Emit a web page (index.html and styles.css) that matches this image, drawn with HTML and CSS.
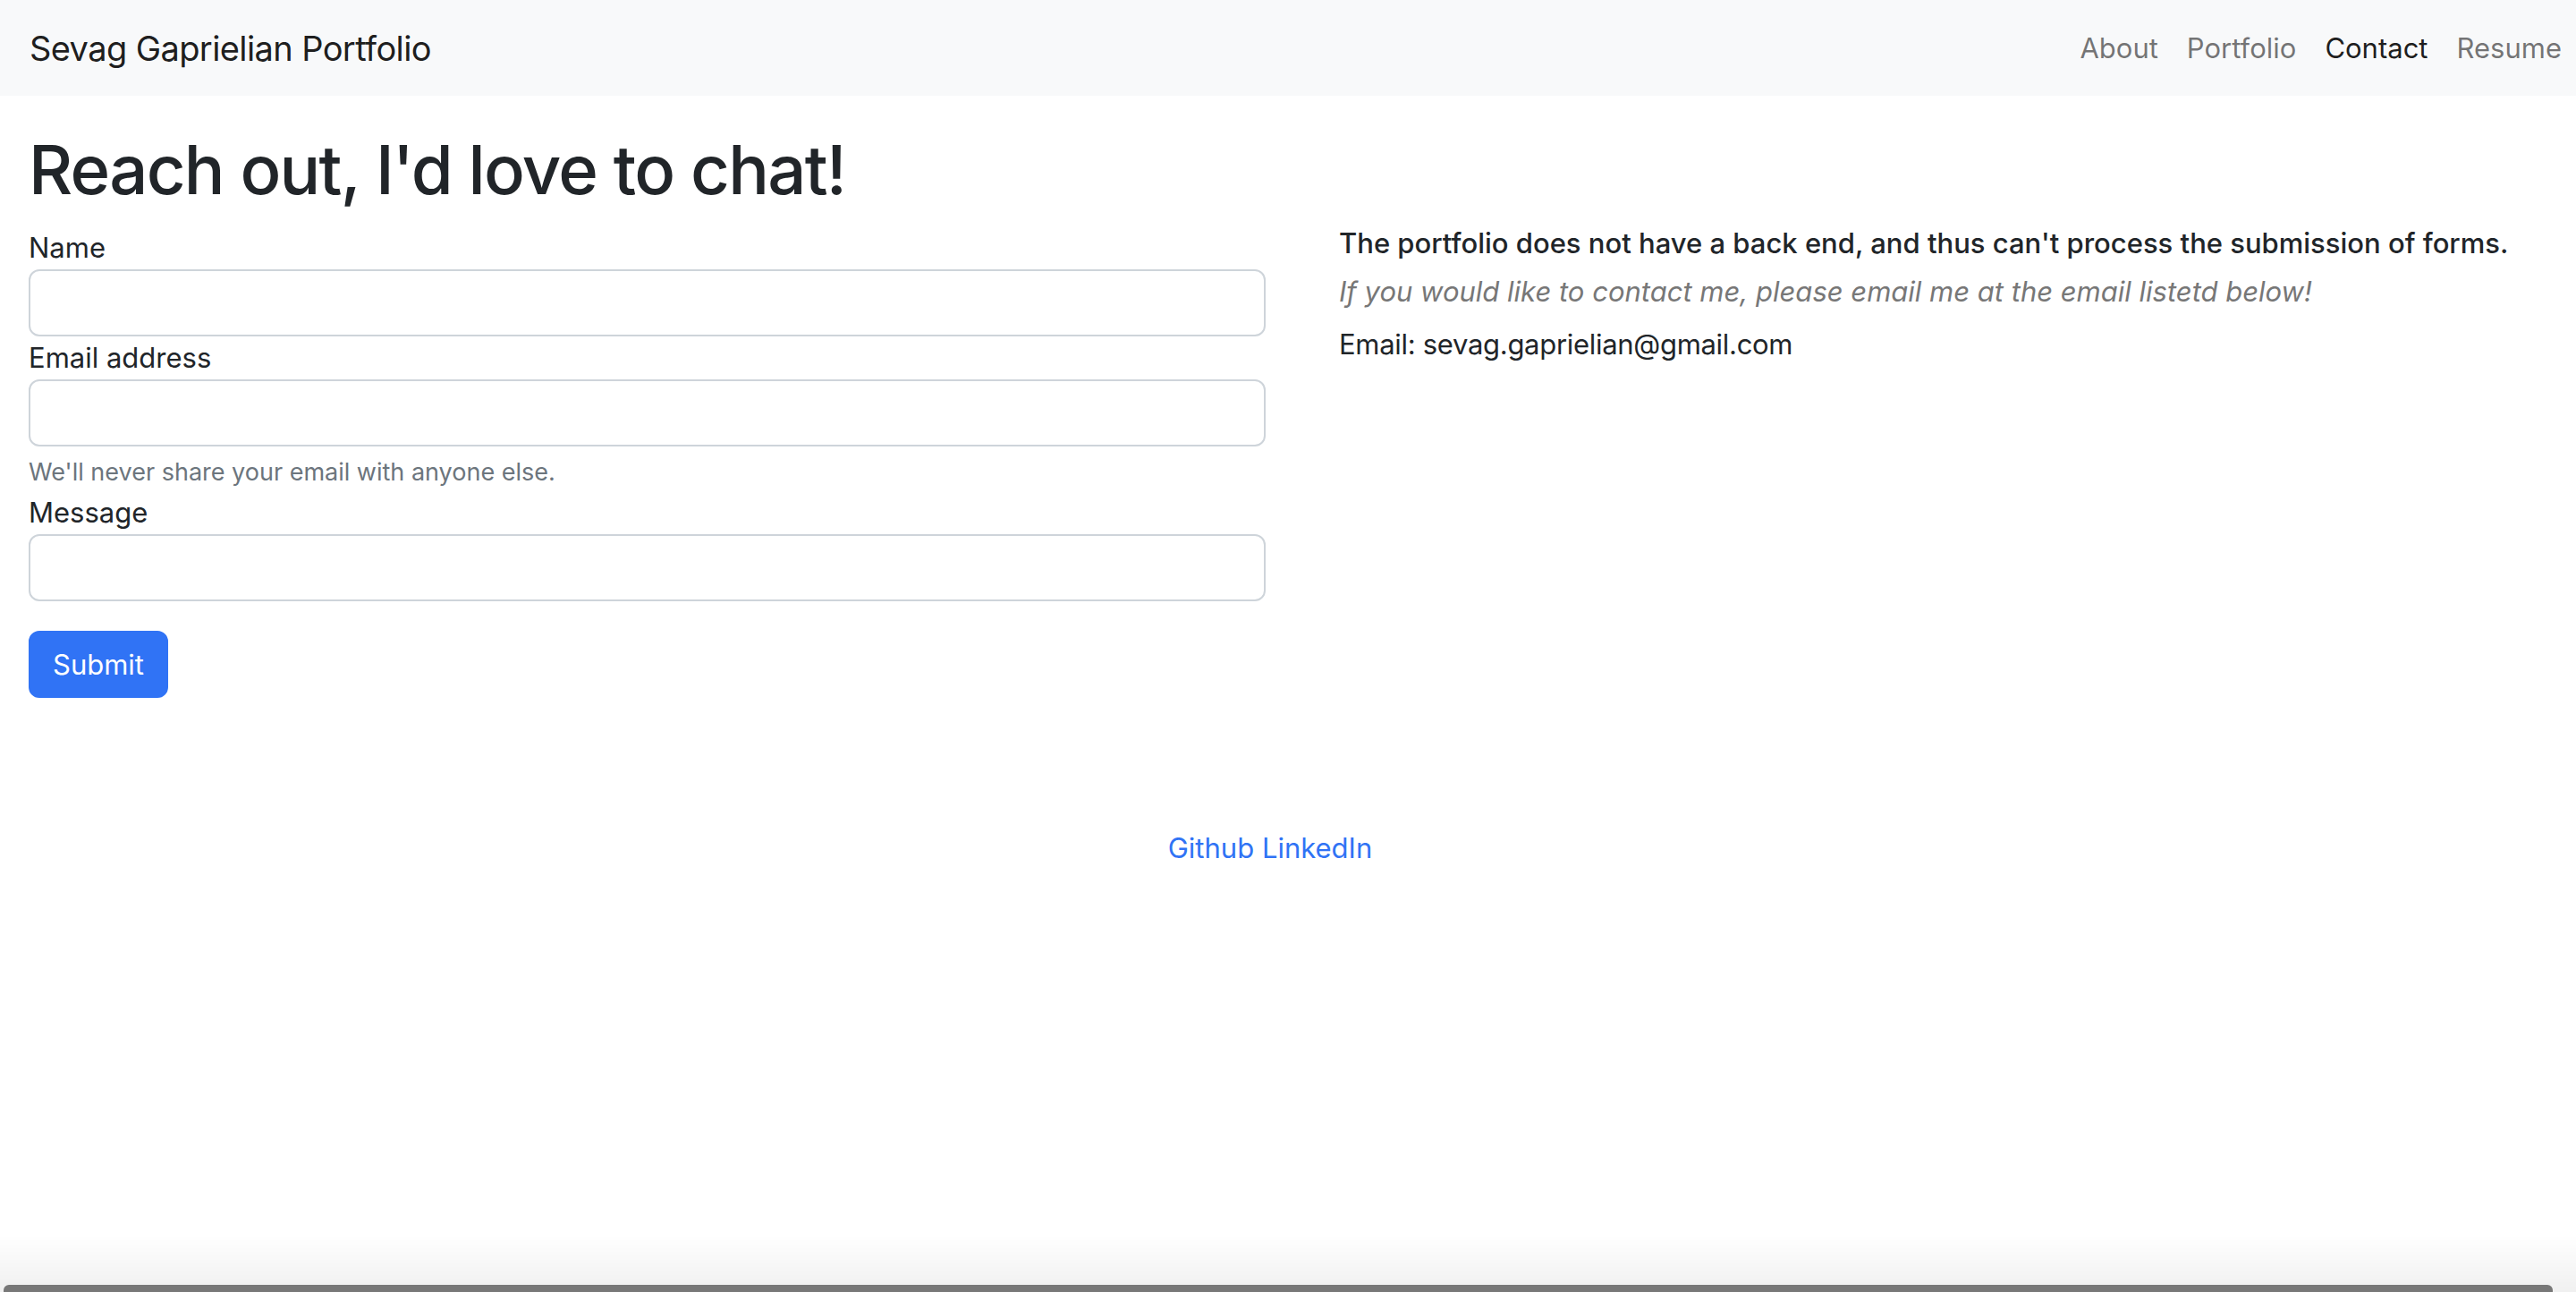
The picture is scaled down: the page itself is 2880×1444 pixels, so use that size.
FILE: index.html
```html
<!DOCTYPE html>
<html lang="en">
<head>
<meta charset="utf-8">
<title>Contact - Sevag Gaprielian Portfolio</title>
<link rel="stylesheet" href="styles.css">
</head>
<body>
<nav class="navbar">
  <a class="brand" href="#">Sevag Gaprielian Portfolio</a>
  <ul class="nav">
    <li><a class="nav-link" href="#">About</a></li>
    <li><a class="nav-link" href="#">Portfolio</a></li>
    <li><a class="nav-link active" href="#">Contact</a></li>
    <li><a class="nav-link" href="#">Resume</a></li>
  </ul>
</nav>
<main class="container">
  <h1 class="title">Reach out, I'd love to chat!</h1>
  <div class="row">
    <form class="contact-form">
      <label class="form-label" for="name">Name</label>
      <input class="form-control" id="name" type="text">
      <label class="form-label" for="email">Email address</label>
      <input class="form-control" id="email" type="email">
      <div class="form-text">We'll never share your email with anyone else.</div>
      <label class="form-label" for="message">Message</label>
      <input class="form-control" id="message" type="text">
      <button class="btn" type="button">Submit</button>
    </form>
    <aside class="info">
      <h6 class="info-head">The portfolio does not have a back end, and thus can't process the submission of forms.</h6>
      <p class="info-note">If you would like to contact me, please email me at the email listetd below!</p>
      <p class="info-email">Email: sevag.gaprielian@gmail.com</p>
    </aside>
  </div>
</main>
<footer class="footer">
  <a href="#">Github</a> <a href="#">LinkedIn</a>
</footer>
<div class="scroll-shade"><div class="scroll-thumb"></div></div>
</body>
</html>
```
FILE: styles.css
```css
* { box-sizing: border-box; }
html, body { margin: 0; padding: 0; background: #fff; }
body {
  font-family: Inter, "Noto Sans", "Liberation Sans", sans-serif;
  font-size: 31px;
  line-height: 48px;
  color: #212529;
  min-height: 1444px;
}
a { text-decoration: none; }

.navbar {
  height: 107px;
  background: #f8f9fa;
  display: flex;
  align-items: center;
  justify-content: space-between;
  padding: 0 0 0 33px;
}
.brand {
  font-size: 38px;
  line-height: 60px;
  letter-spacing: -0.6px;
  color: rgba(0,0,0,0.9);
}
.nav {
  list-style: none;
  margin: 0;
  padding: 0;
  display: flex;
}
.nav-link {
  display: block;
  padding: 0 16px;
  font-size: 31px;
  line-height: 48px;
  color: rgba(0,0,0,0.55);
}
.nav-link.active { color: rgba(0,0,0,0.9); }

.container { padding: 0 32px; }
.title {
  font-size: 76px;
  font-weight: 500;
  line-height: 96px;
  margin: 34px 0 16px;
  letter-spacing: -1.7px;
}
.row {
  display: grid;
  grid-template-columns: 1383px 1fr;
  column-gap: 82px;
}
.contact-form { display: flex; flex-direction: column; align-items: flex-start; }
.form-label { display: block; line-height: 48px; }
.form-control {
  display: block;
  width: 100%;
  height: 75px;
  border: 2px solid #ced4da;
  border-radius: 12px;
  background: #fff;
  font: inherit;
  padding: 12px 24px;
  margin: 0;
}
.form-text {
  margin-top: 8px;
  font-size: 27px;
  line-height: 42px;
  color: #6c757d;
}
.btn {
  margin-top: 33px;
  height: 75px;
  padding: 0 25px;
  font: inherit;
  color: #fff;
  background: #3073f5;
  border: 2px solid #3073f5;
  border-radius: 12px;
}

.info-head {
  margin: 0 0 16px;
  font-size: 31px;
  font-weight: 500;
  line-height: 38px;
}
.info-note {
  margin: 0 0 21px;
  font-style: italic;
  color: #777;
  line-height: 38px;
}
.info-email {
  margin: 0;
  line-height: 38px;
  letter-spacing: -0.3px;
}

.footer {
  margin-top: 144px;
  text-align: center;
  padding-right: 40px;
  line-height: 48px;
}
.footer a { color: #3073f5; }

.scroll-shade {
  position: fixed;
  left: 0;
  right: 0;
  bottom: 0;
  height: 64px;
  background: linear-gradient(to bottom, rgba(0,0,0,0), rgba(0,0,0,0.06));
  display: flex;
  align-items: flex-end;
  padding: 0 26px 0 4px;
}
.scroll-thumb {
  flex: 1;
  height: 8px;
  background: #787878;
  border-radius: 6px 6px 0 0;
}
```
